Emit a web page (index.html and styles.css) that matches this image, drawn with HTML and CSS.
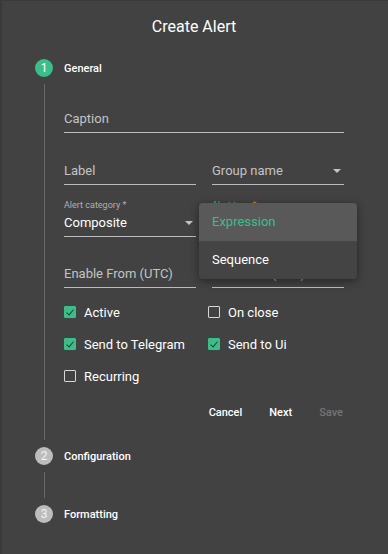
FILE: index.html
```html
<!DOCTYPE html>
<html lang="en">
<head>
    <meta charset="UTF-8">
    <meta name="viewport" content="width=device-width, initial-scale=1.0">
    <title>Create Alert</title>
    <link rel="stylesheet" href="styles.css">
</head>
<body>
    <div class="dialog">
        <h2 class="title">Create Alert</h2>

        <div class="stepper">
            <!-- step 1 -->
            <div class="step-head">
                <span class="step-num active">1</span>
                <span class="step-label">General</span>
            </div>
            <div class="step-body">
                <div class="row first">
                    <div class="field"><span class="placeholder">Caption</span></div>
                </div>
                <div class="row two">
                    <div class="field"><span class="placeholder">Label</span></div>
                    <div class="field">
                        <div class="select-line">
                            <span class="placeholder">Group name</span>
                            <span class="arrow"></span>
                        </div>
                    </div>
                </div>
                <div class="row two">
                    <div class="field">
                        <span class="float-label">Alert category *</span>
                        <div class="select-line">
                            <span class="value">Composite</span>
                            <span class="arrow"></span>
                        </div>
                    </div>
                    <div class="field">
                        <span class="float-label focused">Alert type <b>*</b></span>
                        <div class="select-line">
                            <span class="value">Expression</span>
                            <span class="arrow"></span>
                        </div>
                        <!-- open dropdown -->
                        <div class="menu">
                            <div class="menu-item selected">Expression</div>
                            <div class="menu-item">Sequence</div>
                        </div>
                    </div>
                </div>
                <div class="row two tight">
                    <div class="field"><span class="placeholder">Enable From (UTC)</span></div>
                    <div class="field"><span class="placeholder">Enable To (UTC)</span></div>
                </div>

                <div class="checks">
                    <label class="check"><span class="box checked"></span>Active</label>
                    <label class="check"><span class="box"></span>On close</label>
                    <label class="check"><span class="box checked"></span>Send to Telegram</label>
                    <label class="check"><span class="box checked"></span>Send to Ui</label>
                    <label class="check"><span class="box"></span>Recurring</label>
                </div>

                <div class="actions">
                    <button class="btn">Cancel</button>
                    <button class="btn">Next</button>
                    <button class="btn disabled">Save</button>
                </div>
            </div>

            <!-- step 2 -->
            <div class="step-head">
                <span class="step-num">2</span>
                <span class="step-label">Configuration</span>
            </div>
            <div class="step-body empty"></div>

            <!-- step 3 -->
            <div class="step-head">
                <span class="step-num">3</span>
                <span class="step-label">Formatting</span>
            </div>
        </div>
    </div>
</body>
</html>
```

FILE: styles.css
```css
* {
    margin: 0;
    padding: 0;
    box-sizing: border-box;
}

body {
    width: 388px;
    height: 554px;
    background: #424242;
    font-family: Roboto, 'Liberation Sans', sans-serif;
    color: #fff;
    overflow: hidden;
}

.dialog {
    width: 100%;
    height: 100%;
    background: #424242;
    border-left: 2px solid #3a3a3a;
    border-top: 1px solid #3a3a3a;
    padding-top: 16px;
}

.title {
    font-size: 16px;
    font-weight: 400;
    line-height: 20px;
    text-align: center;
    margin-bottom: 22px;
    margin-left: -2px;
}

.stepper {
    padding-left: 33px;
}

.step-head {
    display: flex;
    align-items: center;
    height: 18px;
}

.step-num {
    width: 18px;
    height: 18px;
    border-radius: 50%;
    background: #bdbdbd;
    color: #f2f2f2;
    font-size: 12px;
    line-height: 18px;
    text-align: center;
    margin-right: 11px;
}

.step-num.active {
    background: #3bbf8a;
    color: #fff;
}

.step-label {
    font-size: 11px;
    font-weight: 500;
}

.step-body {
    margin: 7px 0 7px 9px;
    border-left: 1px solid #6a6a6a;
    padding: 0 0 8px 19px;
    width: 300px;
}

.step-body.empty {
    height: 26px;
    padding: 0;
}

/* form fields */
.row.first {
    padding-top: 1px;
}

.row + .row {
    margin-top: 4px;
}

.row.tight {
    margin-top: 3px;
}

.row.two {
    display: grid;
    grid-template-columns: 1fr 1fr;
    gap: 16px;
}

.field {
    position: relative;
    height: 48px;
    border-bottom: 1px solid #bcbcbc;
    padding-bottom: 4px;
    display: flex;
    flex-direction: column;
    justify-content: flex-end;
    font-size: 13px;
    line-height: 18px;
}

.placeholder {
    color: #c4c4c4;
}

.value {
    color: #fff;
}

.float-label {
    font-size: 9px;
    line-height: 12px;
    color: #b0b0b0;
    margin-bottom: 3px;
}

.float-label.focused {
    color: #3bbf8a;
}

.float-label b {
    color: #e08a1e;
    font-weight: 400;
}

.select-line {
    display: flex;
    align-items: center;
    justify-content: space-between;
}

.arrow {
    width: 0;
    height: 0;
    border-left: 4px solid transparent;
    border-right: 4px solid transparent;
    border-top: 4px solid #c4c4c4;
    margin-right: 3px;
}

.menu {
    position: absolute;
    left: -13px;
    top: 14px;
    width: 158px;
    background: #444;
    border-radius: 4px;
    box-shadow: 0 2px 8px rgba(0, 0, 0, 0.45);
    overflow: hidden;
    z-index: 5;
}

.menu-item {
    height: 38px;
    line-height: 38px;
    padding-left: 13px;
    font-size: 13px;
    color: #fff;
}

.menu-item.selected {
    background: #595959;
    color: #3bbf8a;
}

/* checkboxes */
.checks {
    display: grid;
    grid-template-columns: 144px 136px;
    grid-auto-rows: 32px;
    margin-top: 8px;
}

.check {
    display: flex;
    align-items: center;
    font-size: 13px;
}

.box {
    width: 12px;
    height: 12px;
    border: 1px solid #d6d6d6;
    border-radius: 1px;
    margin-right: 8px;
    position: relative;
}

.box.checked {
    background: #3bbf8a;
    border-color: #3bbf8a;
}

.box.checked::after {
    content: '';
    position: absolute;
    left: 3px;
    top: 1px;
    width: 3px;
    height: 6px;
    border-right: 1px solid #333;
    border-bottom: 1px solid #333;
    transform: rotate(40deg);
}

/* buttons */
.actions {
    display: flex;
    justify-content: flex-end;
    align-items: center;
    gap: 27px;
    height: 40px;
    padding-right: 1px;
}

.btn {
    background: none;
    border: none;
    padding: 0;
    color: #fff;
    font-family: Roboto, 'Liberation Sans', sans-serif;
    font-size: 11px;
    font-weight: 500;
    cursor: pointer;
}

.btn.disabled {
    color: #757575;
    cursor: default;
}
```
